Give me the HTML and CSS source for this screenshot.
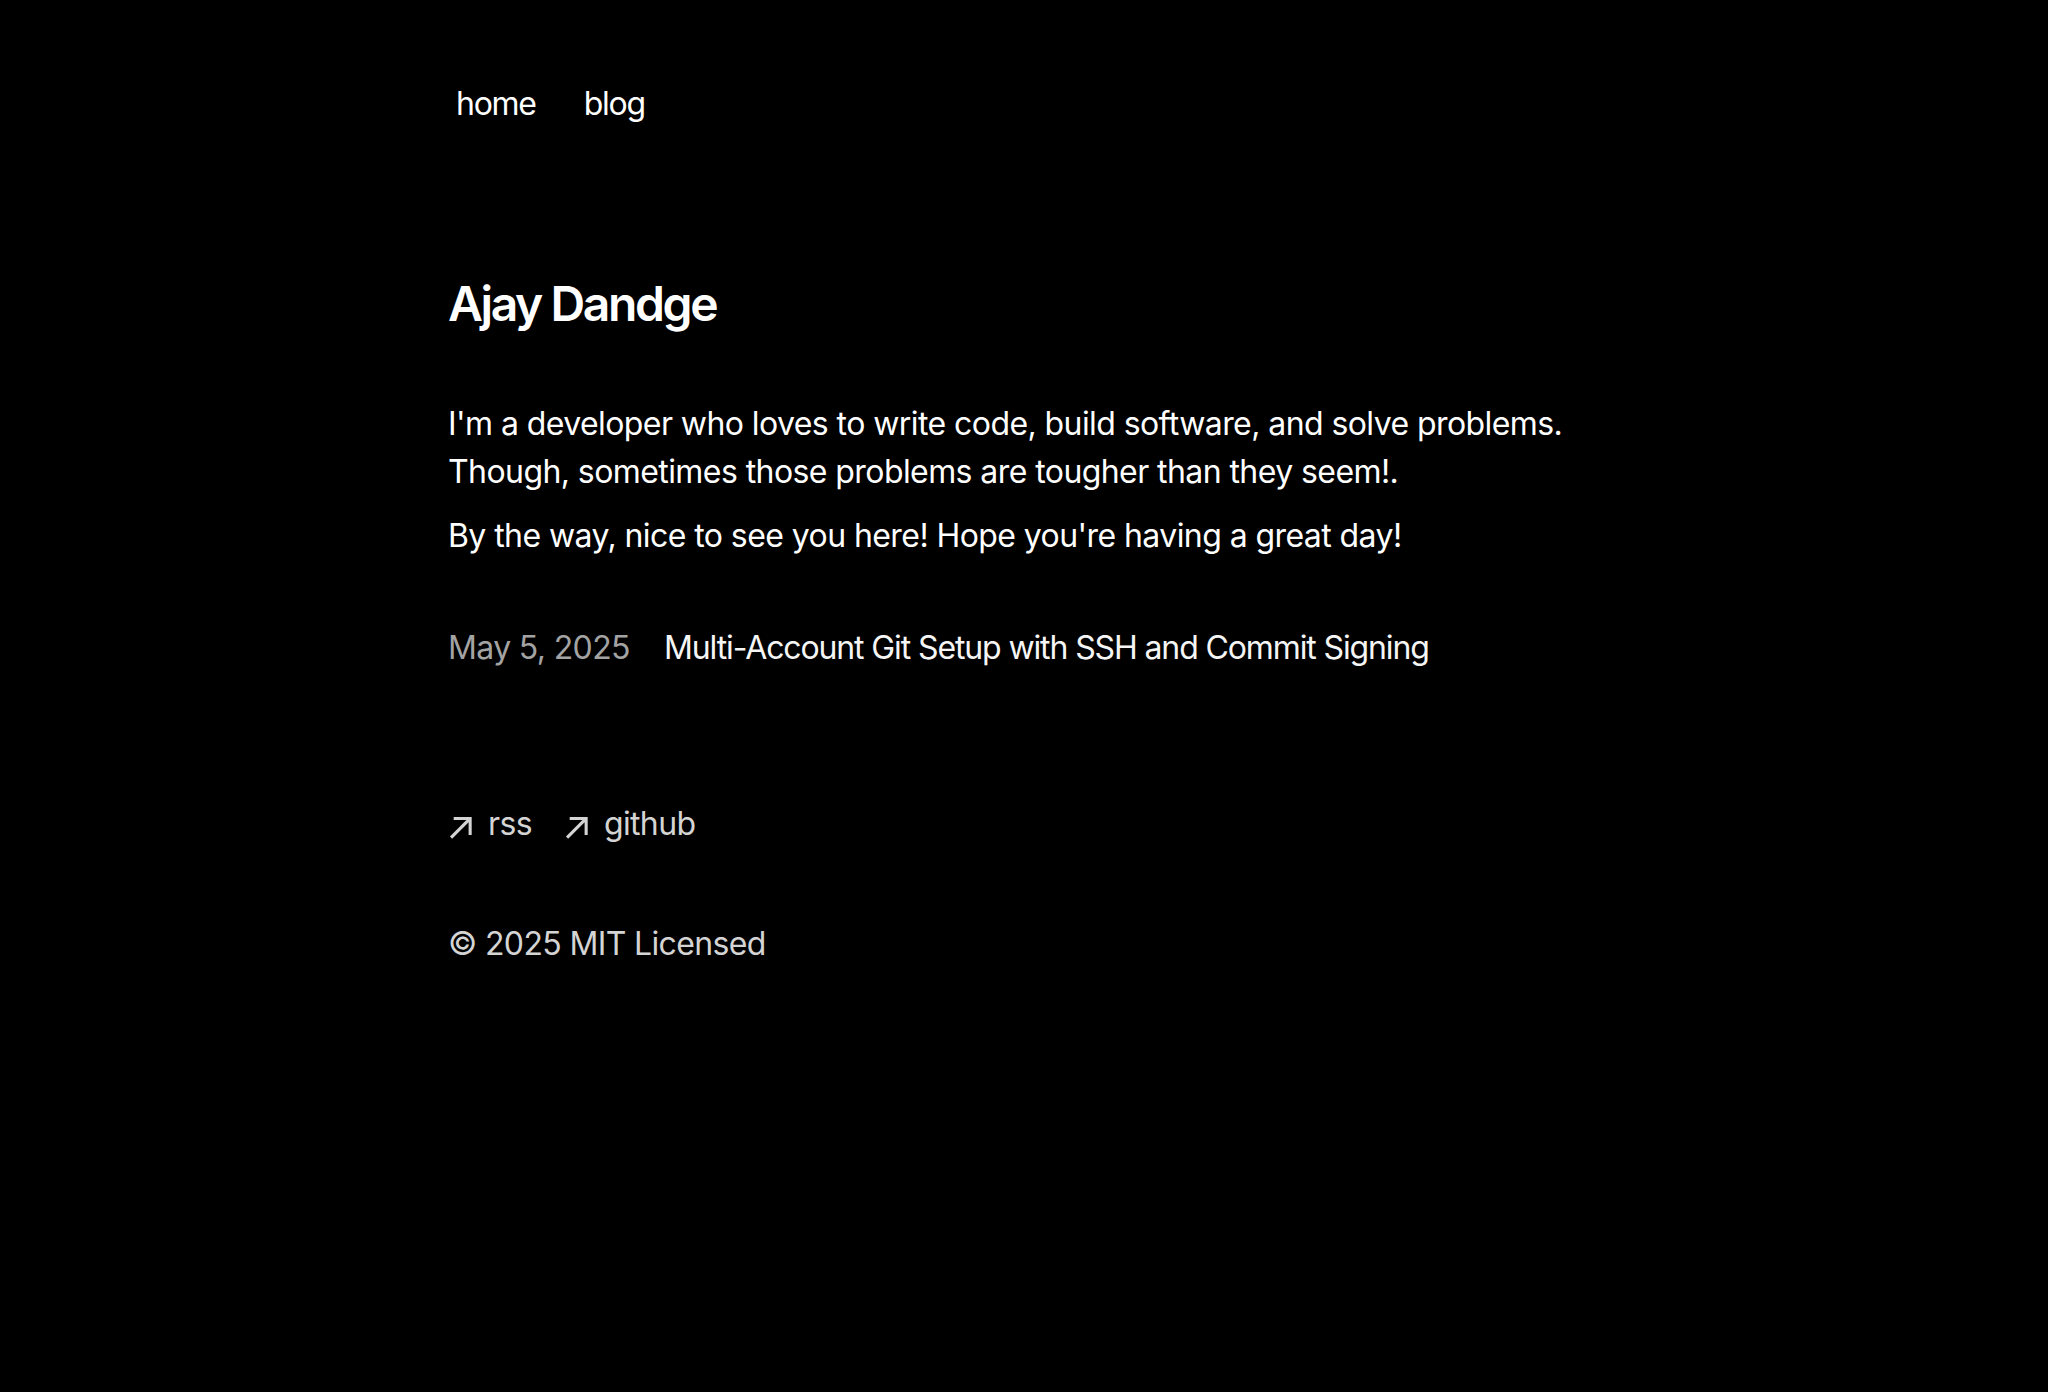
FILE: index.html
```html
<!DOCTYPE html>
<html lang="en">
<head>
<meta charset="utf-8">
<title>Ajay Dandge</title>
<link rel="stylesheet" href="styles.css">
</head>
<body>
<main class="main">
  <aside class="navbar">
    <nav class="nav">
      <a class="nav-link" href="#">home</a>
      <a class="nav-link" href="#">blog</a>
    </nav>
  </aside>
  <section class="intro">
    <h1 class="title">Ajay Dandge</h1>
    <p class="para">I'm a developer who loves to write code, build software, and solve problems. Though, sometimes those problems are tougher than they seem!.</p>
    <p class="para">By the way, nice to see you here! Hope you're having a great day!</p>
    <div class="posts">
      <a class="post" href="#">
        <span class="post-date">May 5, 2025</span>
        <span class="post-title">Multi-Account Git Setup with SSH and Commit Signing</span>
      </a>
    </div>
  </section>
  <footer class="footer">
    <ul class="footer-links">
      <li><a class="footer-link" href="#"><svg class="arrow" width="24" height="24" viewBox="0 0 12 12" fill="none"><path d="M2.07102 11.3494L0.963068 10.2415L9.2017 1.98864H2.83807L2.85227 0.454545H11.8438V9.46023H10.2955L10.3097 3.09659L2.07102 11.3494Z" fill="currentColor"/></svg><span class="footer-label">rss</span></a></li>
      <li><a class="footer-link" href="#"><svg class="arrow" width="24" height="24" viewBox="0 0 12 12" fill="none"><path d="M2.07102 11.3494L0.963068 10.2415L9.2017 1.98864H2.83807L2.85227 0.454545H11.8438V9.46023H10.2955L10.3097 3.09659L2.07102 11.3494Z" fill="currentColor"/></svg><span class="footer-label">github</span></a></li>
    </ul>
    <p class="copyright">© 2025 MIT Licensed</p>
  </footer>
</main>
</body>
</html>
```

FILE: styles.css
```css
* { box-sizing: border-box; }
html, body { background: #000; }
body {
  margin: 64px auto 0;
  max-width: 1152px;
  color: #fff;
  font-family: Inter, "Noto Sans", sans-serif;
  font-size: 32px;
  line-height: 48px;
  letter-spacing: -0.02em;
  -webkit-font-smoothing: antialiased;
}
a { color: inherit; text-decoration: none; }
p, h1, ul { margin: 0; padding: 0; }
.main { display: flex; flex-direction: column; }
.navbar { margin-left: -16px; margin-bottom: 128px; letter-spacing: -0.04em; }
.nav { display: flex; flex-direction: row; }
.nav-link { padding: 8px 16px; margin: 8px; }
.title {
  font-size: 48px;
  line-height: 64px;
  font-weight: 600;
  letter-spacing: -0.05em;
  margin-bottom: 64px;
}
.para { margin-bottom: 16px; letter-spacing: -0.018em; }
.posts { margin: 64px 0; }
.post { display: flex; flex-direction: row; }
.post-date { width: 200px; color: #a3a3a3; }
.post-title { margin-left: 16px; color: #f5f5f5; letter-spacing: -0.035em; }
.footer { margin-top: 64px; margin-bottom: 128px; }
.footer-links { list-style: none; display: flex; flex-direction: row; gap: 32px; color: #d4d4d4; }
.footer-link { display: flex; align-items: center; }
.arrow { flex: none; }
.footer-label { margin-left: 16px; height: 56px; }
.copyright { margin-top: 64px; color: #d4d4d4; }
```
